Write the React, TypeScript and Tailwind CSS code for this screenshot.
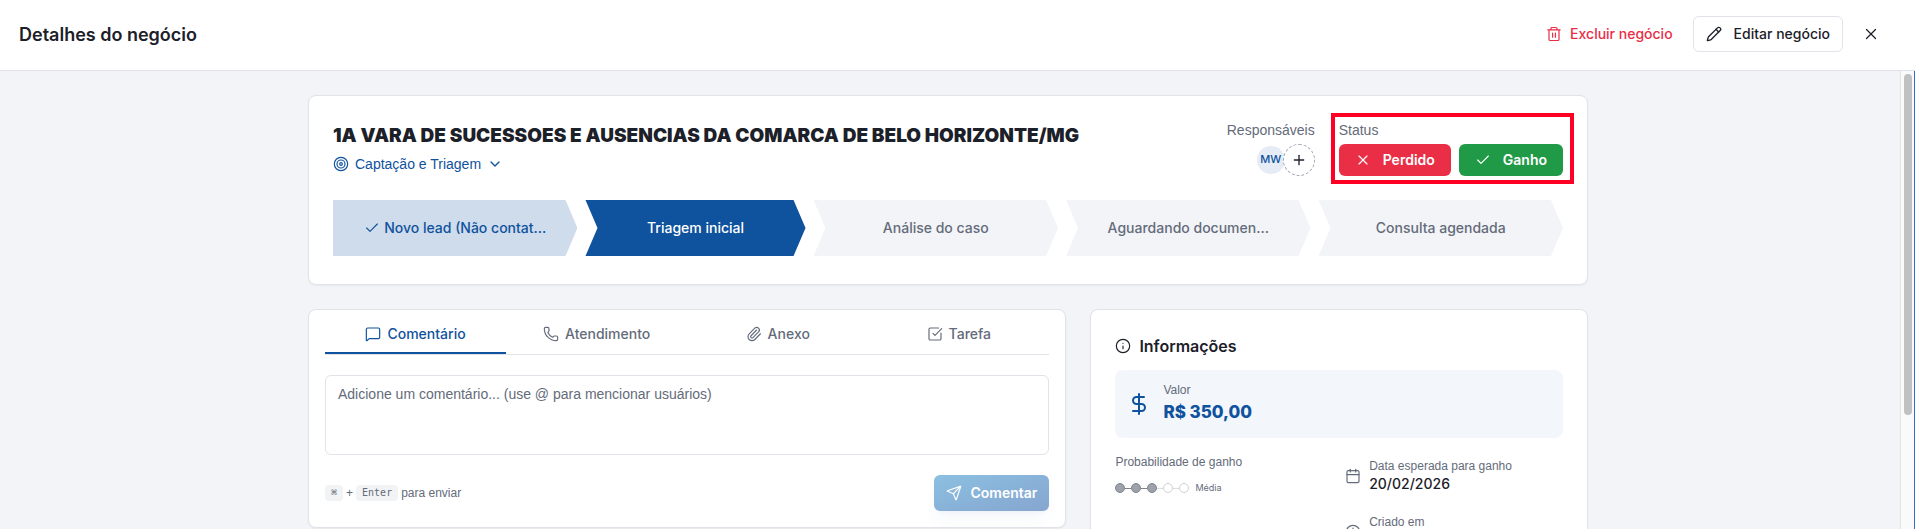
import React, { useState } from "react";
import {
  Calendar,
  Check,
  ChevronDown,
  Clock,
  DollarSign,
  Info,
  MessageSquare,
  Paperclip,
  Pencil,
  Phone,
  Plus,
  Send,
  SquareCheckBig,
  Target,
  X,
} from "lucide-react";
import clsx from "clsx";

type StageState = "done" | "current" | "pending";

interface Stage {
  name: string;
  state: StageState;
}

const stages: Stage[] = [
  { name: "Novo lead (Não contat...", state: "done" },
  { name: "Triagem inicial", state: "current" },
  { name: "Análise do caso", state: "pending" },
  { name: "Aguardando documen...", state: "pending" },
  { name: "Consulta agendada", state: "pending" },
];

const tabs = [
  { id: "comentario", label: "Comentário", icon: MessageSquare },
  { id: "atendimento", label: "Atendimento", icon: Phone },
  { id: "anexo", label: "Anexo", icon: Paperclip },
  { id: "tarefa", label: "Tarefa", icon: SquareCheckBig },
];

const TrashIcon = () => (
  <svg
    width="16"
    height="16"
    viewBox="0 0 16 16"
    fill="none"
    stroke="currentColor"
    strokeWidth="1.2"
    strokeLinecap="round"
    strokeLinejoin="round"
    aria-hidden="true"
  >
    <path d="M1.8 3.8h12.4M3 3.8v9.4c0 .8.6 1.3 1.3 1.3h7.4c.7 0 1.3-.5 1.3-1.3V3.8M5 3.8V2.6c0-.7.5-1.1 1.1-1.1h3.8c.6 0 1.1.4 1.1 1.1v1.2M6.6 7.2v4M9.4 7.2v4" />
  </svg>
);

const Header = () => (
  <header className="flex items-center justify-between border-b border-[#e1e3e9] bg-white pt-4 pr-6 pb-[18px] pl-[19px]">
    <h1 className="pt-0.5 text-lg font-semibold">Detalhes do negócio</h1>
    <div className="flex items-center gap-2">
      <button className="flex h-9 items-center gap-2 rounded-md px-3 text-sm font-medium text-[#e92e46]">
        <TrashIcon />
        Excluir negócio
      </button>
      <button className="flex h-9 items-center gap-3 rounded-md border border-[#e1e3e9] px-3 text-sm font-medium">
        <Pencil size={16} strokeWidth={2} />
        Editar negócio
      </button>
      <button aria-label="Fechar" className="flex h-9 w-10 items-center justify-center">
        <X size={18} strokeWidth={1.75} />
      </button>
    </div>
  </header>
);

const StageStep: React.FC<{ stage: Stage; first: boolean }> = ({ stage, first }) => (
  <li
    className={clsx(
      "flex h-14 min-w-0 items-center justify-center gap-1 text-sm font-medium whitespace-nowrap",
      first
        ? "[clip-path:polygon(0_0,calc(100%_-_12px)_0,100%_50%,calc(100%_-_12px)_100%,0_100%)]"
        : "[clip-path:polygon(0_0,calc(100%_-_12px)_0,100%_50%,calc(100%_-_12px)_100%,0_100%,12px_50%)]",
      stage.state === "done" && "bg-[#cfdcec] text-[#0f529e]",
      stage.state === "current" && "bg-[#0f529e] text-white",
      stage.state === "pending" && "bg-[#f3f4f8] text-[#646b7a]"
    )}
  >
    {stage.state === "done" && <Check size={16} strokeWidth={1.75} />}
    {stage.name}
  </li>
);

const DealSummary = () => (
  <section className="rounded-lg border border-[#e1e3e9] bg-white px-6 pt-6 pb-7 shadow-xs">
    <div className="flex items-start justify-between">
      <div>
        <h2 className="text-[19px] leading-8 font-black">
          1A VARA DE SUCESSOES E AUSENCIAS DA COMARCA DE BELO HORIZONTE/MG
        </h2>
        <button className="flex h-6 items-center gap-1.5 font-['Liberation_Sans',sans-serif] text-sm text-[#0f529e]">
          <Target size={16} strokeWidth={1.75} />
          Captação e Triagem
          <ChevronDown size={16} strokeWidth={2} />
        </button>
      </div>

      <div className="flex gap-6">
        <div className="flex flex-col items-end gap-1 text-sm text-[#646b7a]">
          <span className="font-['Liberation_Sans',sans-serif]">Responsáveis</span>
          <div className="flex items-center">
            <span className="flex size-7 items-center justify-center rounded-full bg-[#e5ecf5] text-[11px] font-medium text-[#0f529e]">
              MW
            </span>
            <button
              aria-label="Adicionar responsável"
              className="-ml-0.5 flex size-8 items-center justify-center rounded-full border border-dashed border-[#a3a7b0] bg-white text-[#1c2029]"
            >
              <Plus size={16} strokeWidth={2} />
            </button>
          </div>
        </div>

        <div className="relative flex flex-col gap-1 text-sm">
          <span className="font-['Liberation_Sans',sans-serif] text-[#646b7a]">Status</span>
          <div className="flex gap-2 font-semibold text-white">
            <button className="flex h-8 items-center gap-3 rounded-md bg-[#e92e46] px-4">
              <X size={16} strokeWidth={1.75} />
              Perdido
            </button>
            <button className="flex h-8 items-center gap-3 rounded-md bg-[#219a47] px-4">
              <Check size={16} strokeWidth={1.75} />
              Ganho
            </button>
          </div>
          <div className="pointer-events-none absolute -top-[7px] -right-[11px] -bottom-2 -left-2 border-4 border-[#ff0024]" />
        </div>
      </div>
    </div>

    <ol className="mt-6 grid grid-cols-[10fr_9fr_10fr_10fr_10fr] gap-2">
      {stages.map((stage, i) => (
        <StageStep key={stage.name} stage={stage} first={i === 0} />
      ))}
    </ol>
  </section>
);

const Kbd: React.FC<{ children: React.ReactNode }> = ({ children }) => (
  <kbd className="rounded bg-[#f2f3f5] px-1.5 font-['DejaVu_Sans_Mono',monospace] text-[10px] leading-4">
    {children}
  </kbd>
);

const ActivityCard = () => {
  const [activeTab, setActiveTab] = useState("comentario");
  const [comment, setComment] = useState("");

  return (
    <section className="col-span-3 self-start rounded-lg border border-[#e1e3e9] bg-white px-4 pb-4 shadow-xs">
      <div role="tablist" className="grid grid-cols-4 border-b border-[#e1e3e9]">
        {tabs.map(({ id, label, icon: Icon }) => (
          <button
            key={id}
            role="tab"
            aria-selected={activeTab === id}
            onClick={() => setActiveTab(id)}
            className={clsx(
              "flex h-11 items-center justify-center gap-1.5 border-b-2 pt-1.5 text-sm font-medium",
              activeTab === id
                ? "border-[#0f529e] text-[#0f529e]"
                : "border-transparent text-[#646b7a]"
            )}
          >
            <Icon size={16} strokeWidth={1.75} />
            {label}
          </button>
        ))}
      </div>

      <textarea
        aria-label="Comentário"
        value={comment}
        onChange={(e) => setComment(e.target.value)}
        placeholder="Adicione um comentário... (use @ para mencionar usuários)"
        className="mt-5 block h-20 w-full resize-none rounded-md border border-[#e1e3e9] px-3 py-2 font-['Liberation_Sans',sans-serif] text-sm placeholder:text-[#646b7a]"
      />

      <div className="mt-5 flex items-center justify-between">
        <p className="flex items-center gap-[3px] font-['Liberation_Sans',sans-serif] text-xs text-[#646b7a]">
          <Kbd>⌘</Kbd>+<Kbd>Enter</Kbd>para enviar
        </p>
        <button className="flex h-9 items-center gap-2 rounded-md bg-linear-to-br from-[#8bc0e1] to-[#86a5cf] px-3 text-sm font-semibold text-white shadow-lg shadow-[#0f529e]/5">
          <Send size={16} strokeWidth={1.75} />
          Comentar
        </button>
      </div>
    </section>
  );
};

const Probability: React.FC<{ level: number; label: string }> = ({ level, label }) => (
  <div className="mt-3 flex items-center">
    {[1, 2, 3, 4, 5].map((step) => (
      <React.Fragment key={step}>
        {step > 1 && (
          <span className={clsx("h-px w-1.5", step <= level ? "bg-[#7f848e]" : "bg-[#dcdee2]")} />
        )}
        <span
          className={clsx(
            "size-2.5 rounded-full border",
            step <= level ? "border-[#7f848e] bg-[#9da1a9]" : "border-[#cfd1d6] bg-white"
          )}
        />
      </React.Fragment>
    ))}
    <span className="ml-1.5 text-[9px] leading-3 text-[#646b7a]">{label}</span>
  </div>
);

interface InfoItemProps {
  icon: React.ReactNode;
  label: string;
  value: string;
}

const InfoItem: React.FC<InfoItemProps> = ({ icon, label, value }) => (
  <div className="flex items-center gap-2 py-1">
    <span className="text-[#646b7a]">{icon}</span>
    <div>
      <p className="font-['Liberation_Sans',sans-serif] text-xs text-[#646b7a]">{label}</p>
      <p className="text-sm font-medium">{value}</p>
    </div>
  </div>
);

const InfoCard = () => (
  <section className="col-span-2 rounded-lg border border-[#e1e3e9] bg-white p-6 shadow-xs">
    <h3 className="flex items-center gap-2 text-base font-semibold">
      <Info size={16} strokeWidth={1.75} />
      Informações
    </h3>

    <div className="mt-3 flex items-center gap-3 rounded-lg bg-[#f3f6fb] p-3">
      <DollarSign size={24} strokeWidth={2} className="text-[#0f529e]" />
      <div>
        <p className="font-['Liberation_Sans',sans-serif] text-xs text-[#646b7a]">Valor</p>
        <p className="text-[17px] leading-7 font-extrabold text-[#0f529e]">R$ 350,00</p>
      </div>
    </div>

    <div className="mt-4 grid grid-cols-2 gap-3">
      <div>
        <p className="font-['Liberation_Sans',sans-serif] text-xs text-[#646b7a]">Probabilidade de ganho</p>
        <Probability level={3} label="Média" />
      </div>
      <InfoItem icon={<Calendar size={16} strokeWidth={1.75} />} label="Data esperada para ganho" value="20/02/2026" />
      <div />
      <InfoItem icon={<Clock size={16} strokeWidth={1.75} />} label="Criado em" value="20/01/2026" />
    </div>
  </section>
);

export default function App() {
  return (
    <div className="flex h-screen flex-col overflow-hidden bg-[#f3f4f8] font-['Inter',sans-serif] text-[#1c2029]">
      <Header />
      <div className="flex min-h-0 flex-1">
        <main className="min-w-0 flex-1 overflow-hidden py-6 pr-1">
          <div className="mx-auto flex max-w-7xl flex-col gap-6">
            <DealSummary />
            <div className="grid grid-cols-5 gap-6">
              <ActivityCard />
              <InfoCard />
            </div>
          </div>
        </main>
        {/* Scroll track */}
        <div
          aria-hidden="true"
          className="w-[15px] border-r border-l border-r-[#2f6fc4] border-l-[#e3e3e3] bg-[#fafafa] px-[3px] pt-[3px]"
        >
          <div className="h-3/4 w-2 rounded-full bg-[#c1c1c1]" />
        </div>
      </div>
    </div>
  );
}
